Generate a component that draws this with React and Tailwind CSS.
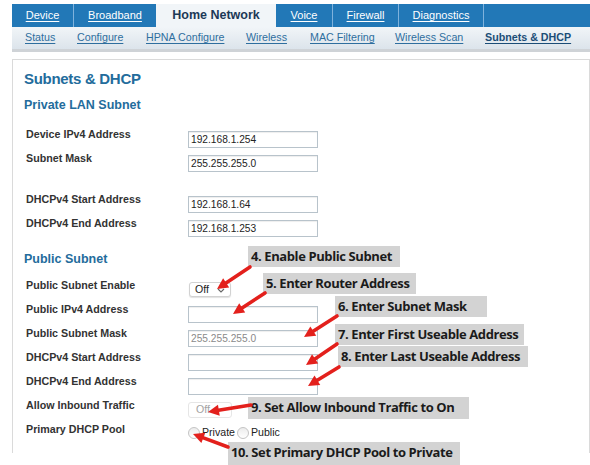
import React from "react";

// Router "Home Network > Subnets & DHCP" page with red callout annotations on top.

const TABS = [
  { label: "Device", cls: "w-[61px]" },
  { label: "Broadband", cls: "w-[83px] border-l border-[#7fb2dc]" },
  { label: "Home Network", cls: "w-[120px]", active: true },
  { label: "Voice", cls: "w-[56px]" },
  { label: "Firewall", cls: "w-[66px] border-l border-[#7fb2dc]" },
  { label: "Diagnostics", cls: "w-[85px] border-l border-[#7fb2dc]" },
];

const SUBNAV = [
  { label: "Status", cls: "w-[52px]" },
  { label: "Configure", cls: "w-[69px]" },
  { label: "HPNA Configure", cls: "w-[100px]" },
  { label: "Wireless", cls: "w-[64px]" },
  { label: "MAC Filtering", cls: "w-[85px]" },
  { label: "Wireless Scan", cls: "w-[90px]" },
  { label: "Subnets & DHCP", cls: "", active: true },
];

const NOTES = [
  { text: "4. Enable Public Subnet", cls: "left-[248px] top-[246px] w-[152px] h-[21px]" },
  { text: "5. Enter Router Address", cls: "left-[263px] top-[273px] w-[153px] h-[21px]" },
  { text: "6. Enter Subnet Mask", cls: "left-[335px] top-[296px] w-[152px] h-[21px]" },
  { text: "7. Enter First Useable Address", cls: "left-[335px] top-[324px] w-[189px] h-[21px]" },
  { text: "8. Enter Last Useable Address", cls: "left-[338px] top-[346px] w-[190px] h-[21px]" },
  { text: "9. Set Allow Inbound Traffic to On", cls: "left-[248px] top-[397px] w-[221px] h-[22px]" },
  { text: "10. Set Primary DHCP Pool to Private", cls: "left-[228px] top-[442px] w-[232px] h-[23px]" },
];

// [startX, startY, tipX, tipY]
const ARROWS = [
  [250, 267, 217, 289],
  [265, 293, 233, 314],
  [337, 316, 304, 337],
  [337, 344, 306, 365],
  [339, 367, 308, 386],
  [251, 405, 208, 412],
  [228, 447, 193, 434],
];

function Arrow({ a }) {
  const [x1, y1, x2, y2] = a;
  const dx = x2 - x1;
  const dy = y2 - y1;
  const len = Math.hypot(dx, dy);
  const ux = dx / len;
  const uy = dy / len;
  const head = 11;
  const half = 5.5;
  const bx = x2 - ux * head;
  const by = y2 - uy * head;
  const p1 = `${bx - uy * half},${by + ux * half}`;
  const p2 = `${bx + uy * half},${by - ux * half}`;
  return (
    <g>
      <line x1={x1} y1={y1} x2={bx + ux * 2} y2={by + uy * 2} stroke="#e3201c" strokeWidth="3.6" strokeLinecap="round" />
      <polygon points={`${x2},${y2} ${p1} ${p2}`} fill="#e3201c" />
    </g>
  );
}

function Row({ label, children }) {
  return (
    <div className="flex h-[24px] items-start pl-[13px]">
      <div className="w-[162px] text-[10.7px] font-bold leading-[13px] text-[#333]">{label}</div>
      {children}
    </div>
  );
}

function TextBox({ value = "", muted }) {
  return (
    <input
      readOnly
      value={value}
      className={`mt-[3px] box-border h-[17px] w-[130px] border border-[#b8c3cb] bg-white pl-[2px] text-[10.2px] leading-[15px] shadow-[inset_0_1px_1px_rgba(0,0,0,0.07)] outline-none ${
        muted ? "text-[#8a8a8a]" : "text-[#222]"
      }`}
    />
  );
}

function Radio({ label }) {
  return (
    <div className="flex items-center">
      <span className="box-border h-[12px] w-[12px] rounded-full border border-[#c4c4c4] bg-gradient-to-b from-[#ececec] to-white" />
      <span className="ml-[2px] text-[10.6px] leading-[13px] text-[#222]">{label}</span>
    </div>
  );
}

export default function App() {
  return (
    <div className="relative h-[465px] w-[590px] overflow-hidden bg-white font-['Liberation_Sans',Arial,sans-serif]">
      <div className="pl-[12px] pt-[4px]">
        {/* top tabs */}
        <div className="flex h-[23px] bg-[#2278b7]">
          {TABS.map(t => (
            <div
              key={t.label}
              className={`flex items-center justify-center ${t.cls} ${
                t.active
                  ? "bg-[#f1f5f8] text-[12.5px] font-bold text-[#1c3957]"
                  : "text-[11px] text-white underline underline-offset-[2px]"
              }`}
            >
              {t.label}
            </div>
          ))}
          <div className="flex-1 border-l border-[#7fb2dc]" />
        </div>

        {/* sub navigation */}
        <div className="flex h-[22px] items-center bg-gradient-to-b from-[#f1f5f8] to-[#dce4eb] pb-[2px] pl-[13px]">
          {SUBNAV.map(s => (
            <div
              key={s.label}
              className={`${s.cls} text-[10.7px] underline underline-offset-[2px] ${
                s.active ? "font-bold text-[#1b4d77]" : "text-[#2e6e9e]"
              }`}
            >
              {s.label}
            </div>
          ))}
        </div>
        <div className="h-[3px] bg-[#cfd3d7]" />
        <div className="h-[7px]" />

        {/* panel */}
        <div className="h-[394px] border-l border-r border-t border-[#dadada]">
          <div className="mt-[10px] pl-[11px] text-[15px] font-bold leading-[18px] tracking-[-0.3px] text-[#236c9c]">
            Subnets &amp; DHCP
          </div>
          <div className="mt-[10px] pl-[11px] text-[12.5px] font-bold leading-[15px] text-[#236c9c]">
            Private LAN Subnet
          </div>

          <div className="mt-[15px]">
            <Row label="Device IPv4 Address">
              <TextBox value="192.168.1.254" />
            </Row>
            <Row label="Subnet Mask">
              <TextBox value="255.255.255.0" />
            </Row>
          </div>

          <div className="mt-[17px]">
            <Row label="DHCPv4 Start Address">
              <TextBox value="192.168.1.64" />
            </Row>
            <Row label="DHCPv4 End Address">
              <TextBox value="192.168.1.253" />
            </Row>
          </div>

          <div className="mt-[11px] pl-[11px] text-[12.5px] font-bold leading-[15px] text-[#236c9c]">
            Public Subnet
          </div>

          <div className="mt-[12px]">
            <Row label="Public Subnet Enable">
              <div className="ml-[1px] mt-[3px] box-border flex h-[15px] w-[42px] items-center justify-between rounded-[3px] border border-[#d2d2d2] bg-white pl-[5px] pr-[5px] text-[10.6px] text-[#222] shadow-[0_1px_1px_rgba(0,0,0,0.12)]">
                <span>Off</span>
                <svg width="8" height="5" viewBox="0 0 8 5" className="mt-[2px]">
                  <path d="M1 1 L4 4 L7 1" fill="none" stroke="#666" strokeWidth="1.1" />
                </svg>
              </div>
            </Row>
            <Row label="Public IPv4 Address">
              <TextBox />
            </Row>
            <Row label="Public Subnet Mask">
              <TextBox value="255.255.255.0" muted />
            </Row>
            <Row label="DHCPv4 Start Address">
              <TextBox />
            </Row>
            <Row label="DHCPv4 End Address">
              <TextBox />
            </Row>
            <Row label="Allow Inbound Traffic">
              <div className="mt-[3px] box-border flex h-[16px] w-[44px] items-center rounded-[3px] border border-[#e6e6e6] bg-white pl-[7px] text-[10.6px] text-[#a3a3a3]">
                Off
              </div>
            </Row>
            <Row label="Primary DHCP Pool">
              <div className="mt-[3px] flex items-center gap-[2px]">
                <Radio label="Private" />
                <Radio label="Public" />
              </div>
            </Row>
          </div>
        </div>
      </div>

      {/* annotation callouts */}
      {NOTES.map(n => (
        <div
          key={n.text}
          className={`absolute ${n.cls} bg-[#d3d3d3] pl-[3px] font-['Open_Sans',sans-serif] text-[13px] font-bold leading-[21px] tracking-[-0.4px] whitespace-nowrap text-[#1b1b1b]`}
        >
          {n.text}
        </div>
      ))}
      <svg className="pointer-events-none absolute left-0 top-0" width="590" height="465">
        {ARROWS.map((a, i) => (
          <Arrow key={i} a={a} />
        ))}
      </svg>
    </div>
  );
}
